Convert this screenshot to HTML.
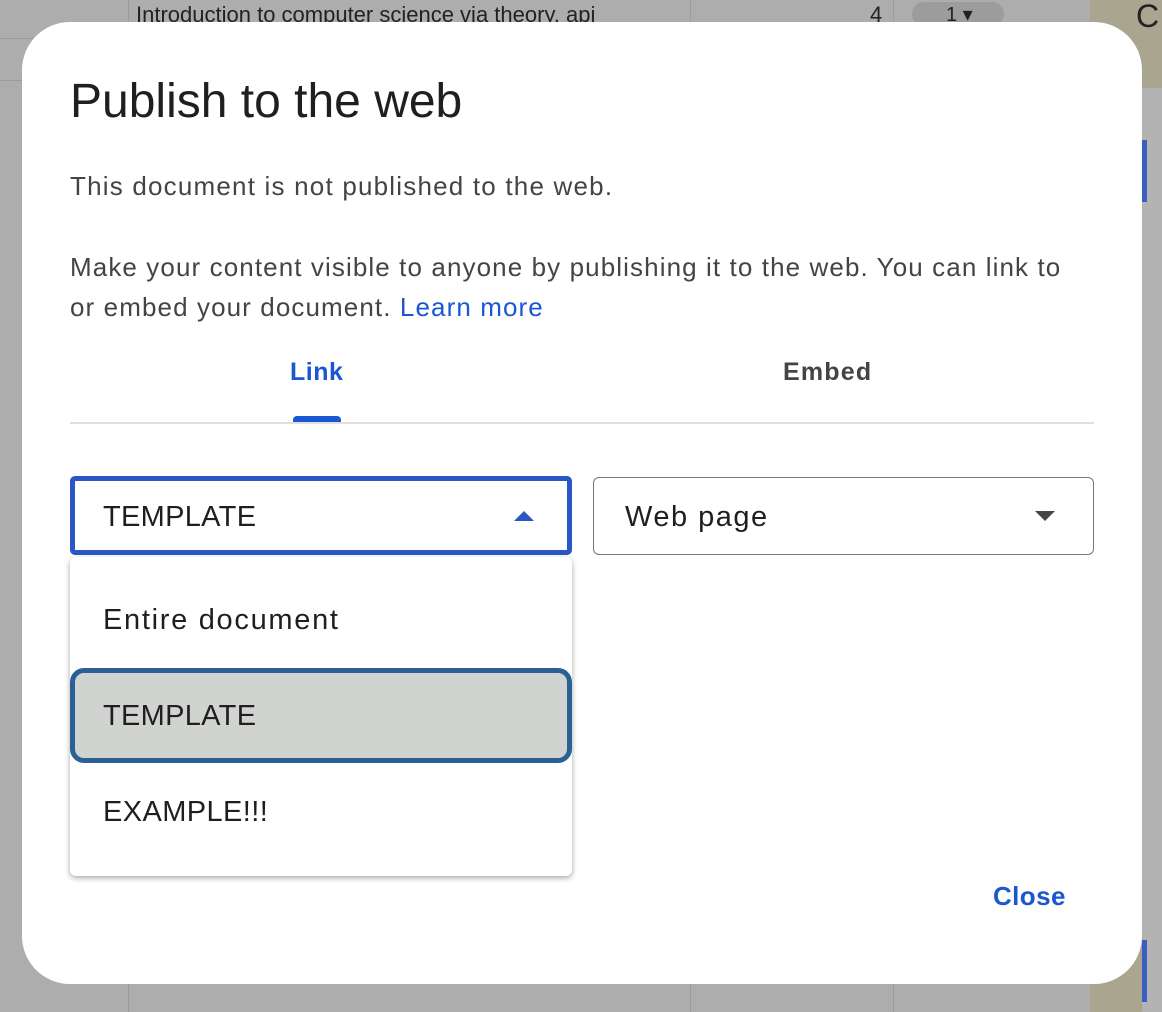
<!DOCTYPE html>
<html><head><style>
*{margin:0;padding:0;box-sizing:border-box}
body{width:1162px;height:1012px;overflow:hidden;background:#adadad;font-family:"Liberation Sans",Arial,sans-serif;position:relative}
.a{position:absolute;white-space:nowrap}
.gl{position:absolute;background:#9c9c9c}
</style></head><body>
<div class="gl" style="left:128px;top:0;width:1px;height:1012px"></div>
<div class="gl" style="left:690px;top:0;width:1px;height:1012px"></div>
<div class="gl" style="left:893px;top:0;width:1px;height:1012px"></div>
<div class="gl" style="left:0;top:38px;width:1090px;height:1px"></div>
<div class="gl" style="left:0;top:80px;width:1090px;height:1px"></div>
<div class="a" style="left:1090px;top:0;width:72px;height:1012px;background:#a9a58f"></div>
<div class="a" style="left:1142px;top:88px;width:20px;height:924px;background:#b3b3b3"></div>
<div class="a" style="left:1142px;top:140px;width:5px;height:62px;background:#3a5fc0"></div>
<div class="a" style="left:1142px;top:940px;width:5px;height:62px;background:#3a5fc0"></div>
<div class="a" style="left:136px;top:2px;font-size:22px;color:#222">Introduction to computer science via theory, api</div>
<div class="a" style="left:870px;top:2px;font-size:22px;color:#222">4</div>
<div class="a" style="left:912px;top:2px;width:92px;height:24px;border-radius:12px;background:#9c9c9c;font-size:20px;color:#222;padding-left:34px">1 ▾</div>
<div class="a" style="left:1136px;top:-2px;font-size:32px;color:#222">C</div>

<div class="a" style="left:22px;top:22px;width:1120px;height:962px;background:#fff;border-radius:48px"></div>
<div class="a" style="left:70px;top:74px;font-size:48px;color:#1f1f1f">Publish to the web</div>
<div class="a" style="left:70px;top:171px;font-size:26px;letter-spacing:1.2px;color:#444">This document is not published to the web.</div>
<div class="a" style="left:70px;top:247px;font-size:26px;letter-spacing:1.1px;line-height:40px;color:#444;width:1010px;white-space:normal">Make your content visible to anyone by publishing it to the web. You can link to or embed your document. <span style="color:#1a57d0">Learn more</span></div>
<div class="a" style="left:290px;top:358px;font-size:25px;color:#1a57d0;font-weight:bold;letter-spacing:.5px">Link</div>
<div class="a" style="left:783px;top:358px;font-size:25px;color:#444;font-weight:bold;letter-spacing:1.2px">Embed</div>
<div class="a" style="left:293px;top:416px;width:48px;height:8px;background:#1a57d0;border-radius:4px 4px 0 0"></div>
<div class="a" style="left:70px;top:422px;width:1024px;height:2px;background:#e0e0e0"></div>

<div class="a" style="left:70px;top:476px;width:502px;height:79px;border:5px solid #2a56c6;border-radius:5px"></div>
<div class="a" style="left:103px;top:501px;font-size:29px;color:#1f1f1f;letter-spacing:.3px">TEMPLATE</div>
<div class="a" style="left:514px;top:511px;width:0;height:0;border-left:10px solid transparent;border-right:10px solid transparent;border-bottom:10px solid #2a56c6"></div>

<div class="a" style="left:593px;top:477px;width:501px;height:78px;border:1.5px solid #777;border-radius:6px"></div>
<div class="a" style="left:625px;top:501px;font-size:29px;color:#1f1f1f;letter-spacing:1.5px">Web page</div>
<div class="a" style="left:1035px;top:511px;width:0;height:0;border-left:10px solid transparent;border-right:10px solid transparent;border-top:10px solid #444"></div>

<div class="a" style="left:70px;top:557px;width:502px;height:319px;background:#fff;border-radius:6px;box-shadow:0 2px 6px rgba(0,0,0,.35)"></div>
<div class="a" style="left:103px;top:604px;font-size:29px;color:#1f1f1f;letter-spacing:1.7px">Entire document</div>
<div class="a" style="left:70px;top:668px;width:502px;height:95px;background:#d1d3d0;border:5px solid #2b6094;border-radius:14px"></div>
<div class="a" style="left:103px;top:700px;font-size:29px;color:#1f1f1f;letter-spacing:.3px">TEMPLATE</div>
<div class="a" style="left:103px;top:796px;font-size:29px;color:#1f1f1f;letter-spacing:.4px">EXAMPLE!!!</div>

<div class="a" style="left:993px;top:881px;font-size:26px;color:#1a57d0;font-weight:bold;letter-spacing:.4px">Close</div>
</body></html>
